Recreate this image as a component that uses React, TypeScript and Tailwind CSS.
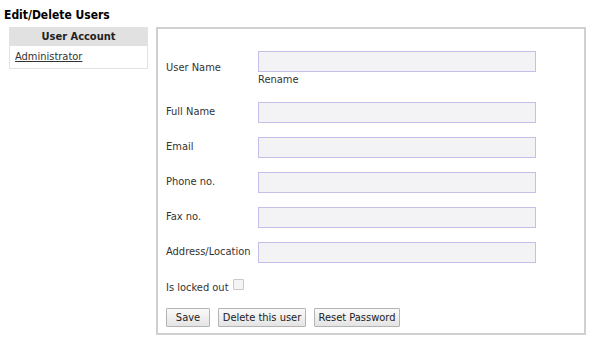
import React from 'react';

const fields = ['Full Name', 'Email', 'Phone no.', 'Fax no.', 'Address/Location'];

const Field = () => (
  <div className="h-[21px] w-[278px] border border-[#c4bfe8] bg-[#f3f3f5]" />
);

const Btn = ({ label, w }: { label: string; w: string }) => (
  <button className={`h-[19px] ${w} border border-[#b4b4b4] bg-gradient-to-b from-[#fafafa] to-[#e4e4e4] text-[11px] leading-[17px] text-[#222] rounded-[1px]`}>
    {label}
  </button>
);

export default function App() {
  return <div className="w-[602px] h-[350px] bg-white text-[11px] text-[#333] [font-family:'DejaVu_Sans_Condensed','DejaVu_Sans',sans-serif]">
      <div className="pl-[4px] pt-[8px] text-[12px] leading-[14px] font-bold text-black">Edit/Delete Users</div>
      <div className="flex items-start pl-[9px] pt-[5px]">
        {/* User list */}
        <div className="w-[139px] border border-[#e2e2e2]">
          <div className="h-[18px] bg-[#e1e1e1] text-center font-bold leading-[18px] text-[#222]">User Account</div>
          <div className="h-[22px] pl-[5px] leading-[22px]">
            <a className="underline text-[#333]">Administrator</a>
          </div>
        </div>
        {/* Edit panel */}
        <div className="ml-[8px] w-[430px] h-[308px] border-2 border-[#d0d0d0] pl-[8px] pt-[22px]">
          <div className="flex items-center">
            <div className="w-[92px]">User Name</div>
            <div>
              <Field />
              <div className="leading-[13px] pt-px">Rename</div>
            </div>
          </div>
          {fields.map((f, i) => <div key={f} className={i === 0 ? 'flex items-center mt-[16px]' : 'flex items-center mt-[14px]'}>
              <div className="w-[92px]">{f}</div>
              <Field />
            </div>)}
          <div className="flex items-start mt-[18px] h-[14px]">
            <span className="leading-[14px]">Is locked out</span>
            <span className="ml-[4px] -mt-[2px] w-[11px] h-[11px] border border-[#c8c8c8] bg-[#f4f4f4] rounded-[1px]" />
          </div>
          <div className="flex gap-[8px] mt-[13px]">
            <Btn label="Save" w="w-[44px]" />
            <Btn label="Delete this user" w="w-[88px]" />
            <Btn label="Reset Password" w="w-[86px]" />
          </div>
        </div>
      </div>
    </div>;
}
